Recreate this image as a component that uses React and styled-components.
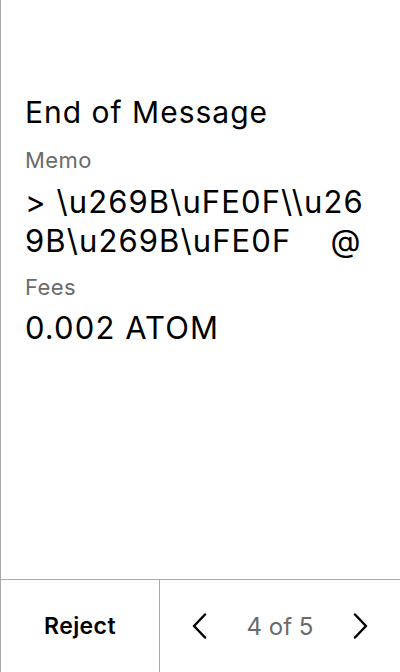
import React from "react";
import styled, { createGlobalStyle } from "styled-components";

const Global = createGlobalStyle`
  html, body { margin: 0; padding: 0; background: #fff; }
  body { font-family: Inter, "Noto Sans", sans-serif; }
`;

const Screen = styled.div`
  width: 400px;
  height: 672px;
  box-sizing: border-box;
  border-left: 1px solid #a8a8a8;
  display: flex;
  flex-direction: column;
  background: #fff;
`;

const Content = styled.div`
  flex: 1;
  padding: 94px 24px 0 24px;
  display: flex;
  flex-direction: column;
`;

const Title = styled.h1`
  margin: 0 0 16px;
  font-size: 30px;
  font-weight: 400;
  line-height: 36px;
  letter-spacing: 1px;
  color: #000;
`;

const Label = styled.div`
  font-size: 22px;
  line-height: 28px;
  letter-spacing: 0.4px;
  color: #6b6b6b;
  margin-bottom: ${(p) => p.$gap || 0}px;
`;

const Value = styled.div`
  font-size: 31px;
  line-height: 39px;
  letter-spacing: 1.1px;
  color: #000;
  white-space: pre-wrap;
  word-break: break-all;
  margin-bottom: ${(p) => p.$gap || 0}px;
`;

const Footer = styled.div`
  height: 92px;
  flex: none;
  border-top: 1px solid #a8a8a8;
  display: grid;
  grid-template-columns: 159px 1fr;
`;

const RejectButton = styled.button`
  border: none;
  border-right: 1px solid #a8a8a8;
  background: none;
  font-family: inherit;
  font-size: 23px;
  font-weight: 600;
  letter-spacing: 0.4px;
  color: #000;
  padding: 0;
`;

const Pager = styled.div`
  display: flex;
  align-items: center;
  justify-content: space-between;
  padding: 0 32px 0 32px;
`;

const Arrow = styled.button`
  border: none;
  background: none;
  padding: 0;
  display: flex;
  align-items: center;
`;

const PageText = styled.span`
  font-size: 24px;
  color: #6b6b6b;
`;

const Chevron = ({ dir }) => (
  <svg width="15" height="26" viewBox="0 0 15 26" fill="none">
    <path
      d={dir === "left" ? "M13 1.5 L2 13 L13 24.5" : "M2 1.5 L13 13 L2 24.5"}
      stroke="#000"
      strokeWidth="2.5"
      strokeLinecap="round"
      strokeLinejoin="round"
    />
  </svg>
);

export default function App() {
  return (
    <>
      <Global />
      <Screen>
        <Content>
          <Title>End of Message</Title>
          <Label $gap={8}>Memo</Label>
          <Value $gap={13}>{"> \\u269B\\uFE0F\\\\u269B\\u269B\\uFE0F    @"}</Value>
          <Label $gap={7}>Fees</Label>
          <Value>0.002 ATOM</Value>
        </Content>
        <Footer>
          <RejectButton>Reject</RejectButton>
          <Pager>
            <Arrow aria-label="Previous"><Chevron dir="left" /></Arrow>
            <PageText>4 of 5</PageText>
            <Arrow aria-label="Next"><Chevron dir="right" /></Arrow>
          </Pager>
        </Footer>
      </Screen>
    </>
  );
}
